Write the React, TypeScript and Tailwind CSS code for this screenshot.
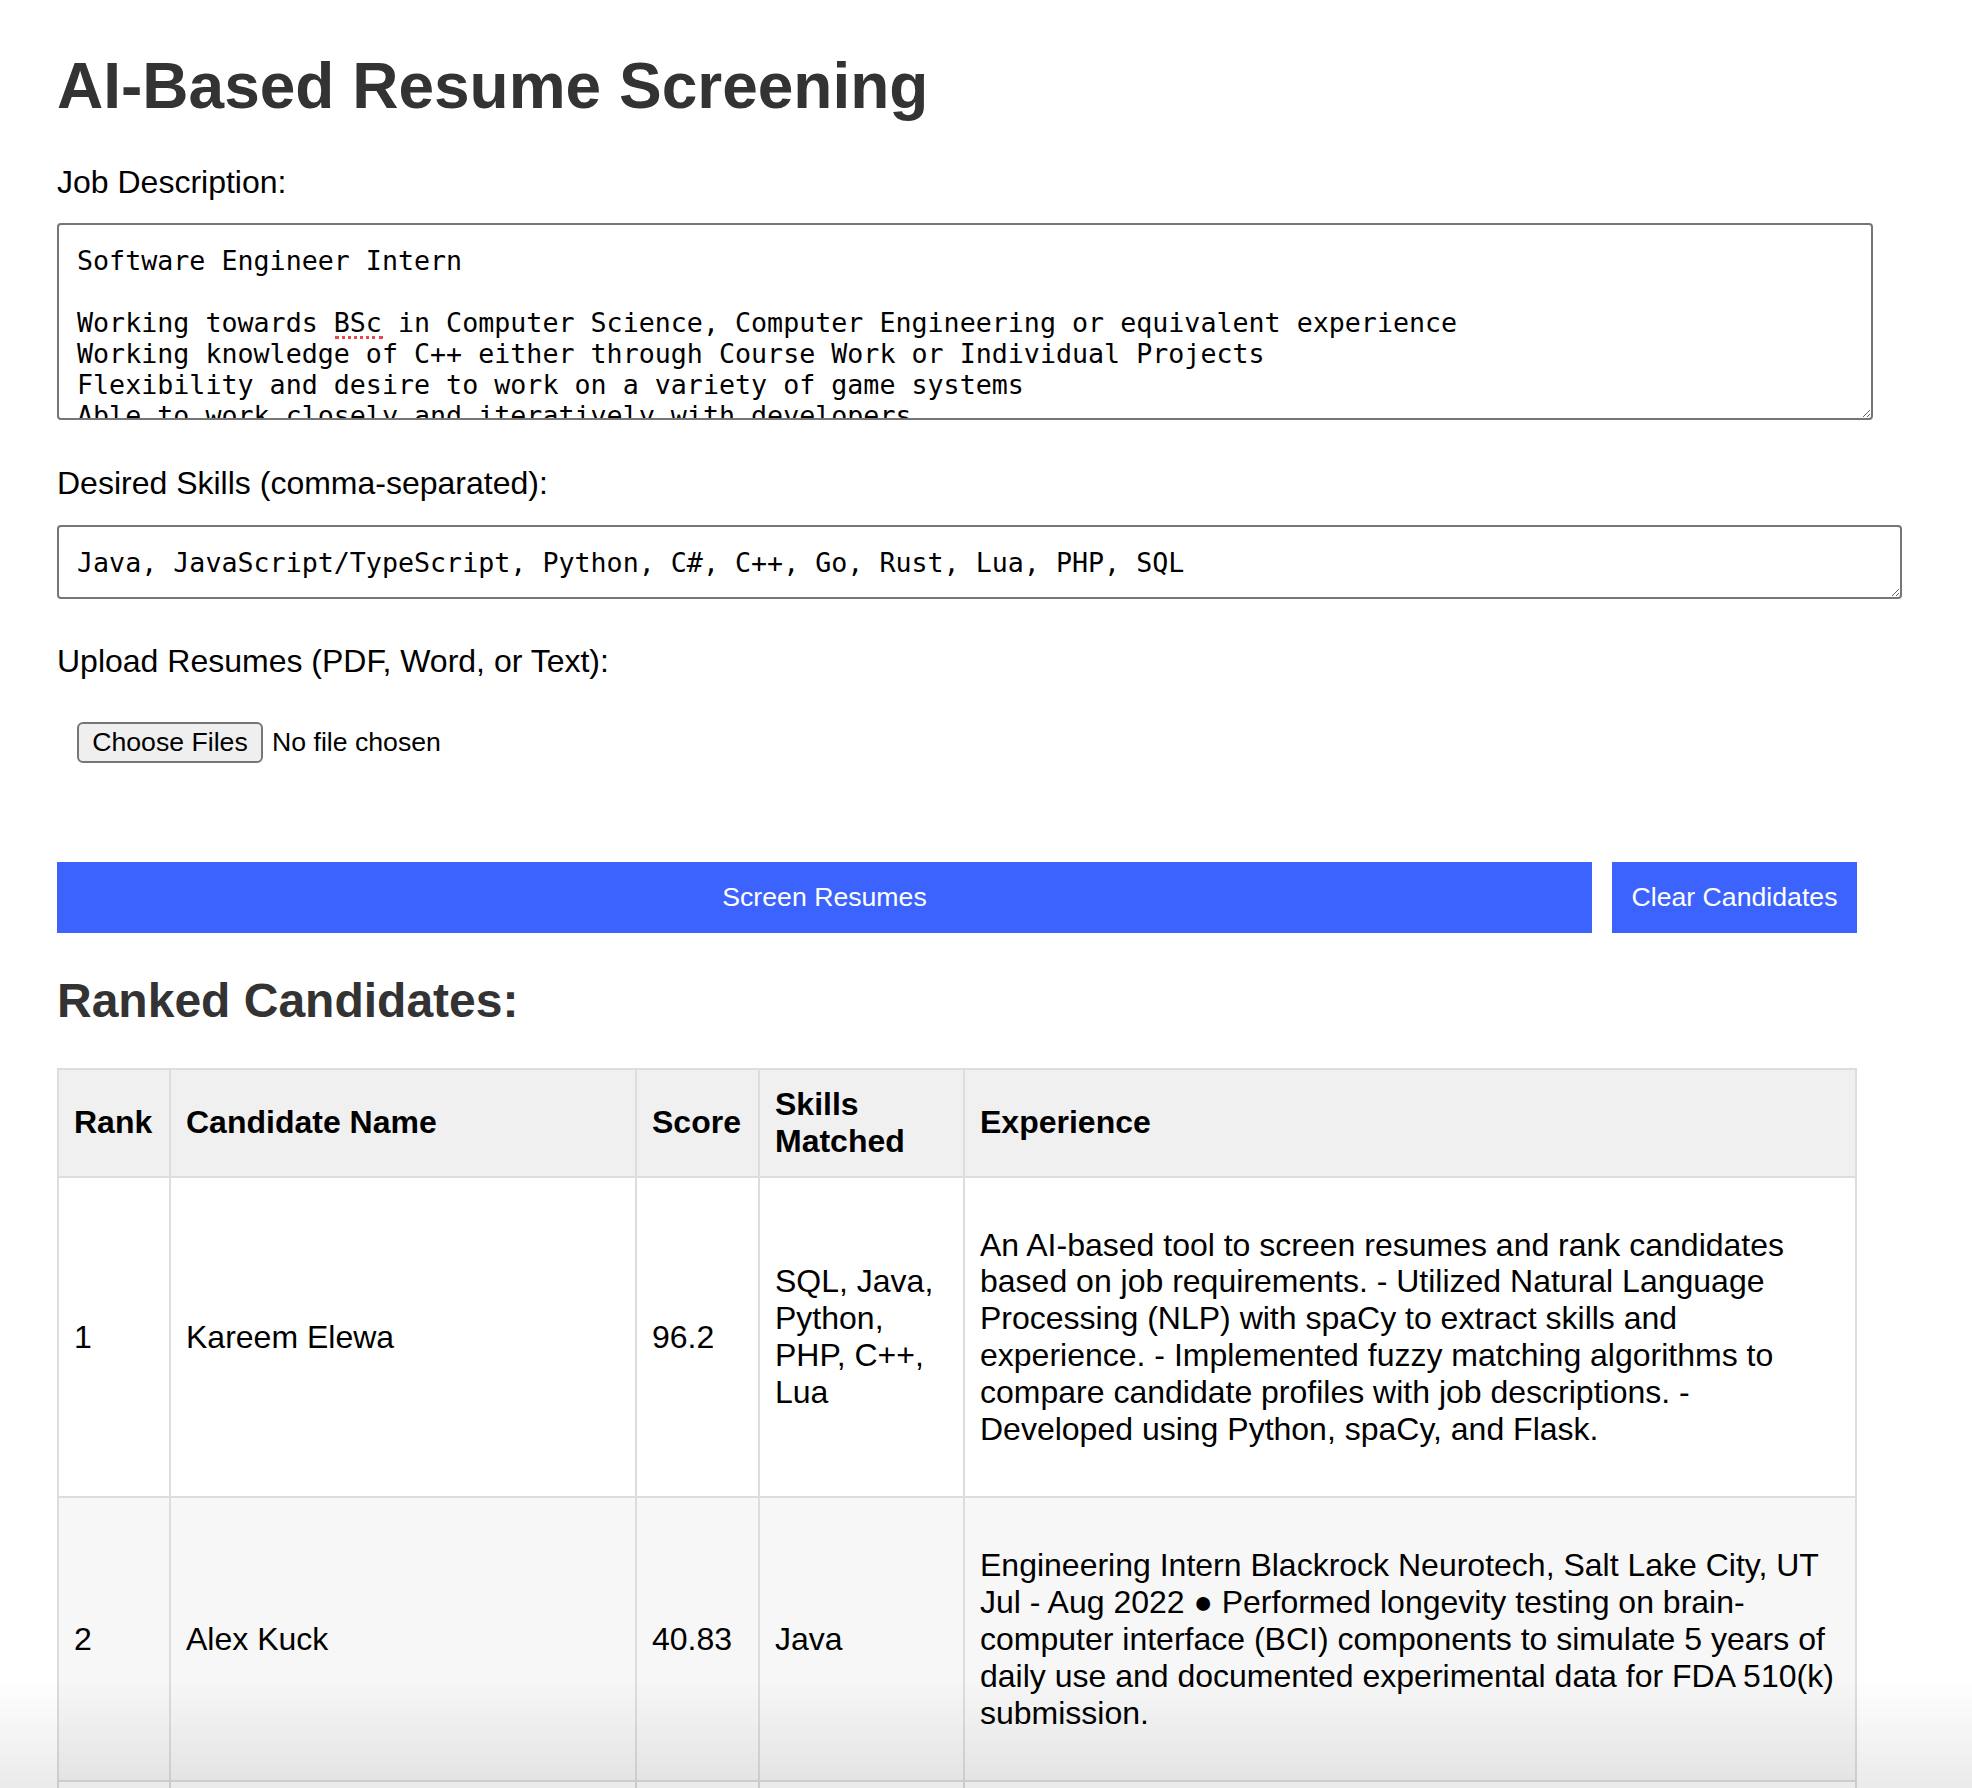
import React from "react";

const jobText = `Software Engineer Intern

Working towards BSc in Computer Science, Computer Engineering or equivalent experience
Working knowledge of C++ either through Course Work or Individual Projects
Flexibility and desire to work on a variety of game systems
Able to work closely and iteratively with developers
Strong communication skills and a passion for games`;

const skillsText = "Java, JavaScript/TypeScript, Python, C#, C++, Go, Rust, Lua, PHP, SQL";

type Row = { rank: number; name: string; score: string; skills: string; exp: string };

const rows: Row[] = [
  {
    rank: 1,
    name: "Kareem Elewa",
    score: "96.2",
    skills: "SQL, Java, Python, PHP, C++, Lua",
    exp: "An AI-based tool to screen resumes and rank candidates based on job requirements. - Utilized Natural Language Processing (NLP) with spaCy to extract skills and experience. - Implemented fuzzy matching algorithms to compare candidate profiles with job descriptions. - Developed using Python, spaCy, and Flask.",
  },
  {
    rank: 2,
    name: "Alex Kuck",
    score: "40.83",
    skills: "Java",
    exp: "Engineering Intern Blackrock Neurotech, Salt Lake City, UT Jul - Aug 2022 \u25CF Performed longevity testing on brain-computer interface (BCI) components to simulate 5 years of daily use and documented experimental data for FDA 510(k) submission.",
  },
  {
    rank: 3,
    name: "Jordan Lee",
    score: "21.5",
    skills: "Python",
    exp: "Research Assistant, University Lab. Built data pipelines and analysis scripts for experimental results.",
  },
];

export default function App() {
  return (
    <div className="relative min-h-[1788px] bg-white font-['Liberation_Sans',Arial,Helvetica,sans-serif] text-black">
      <div className="ml-[57px] flex w-[1800px] flex-col pt-[49px]">
        <h1 className="text-[64px] font-bold leading-[74px] text-[#333333]">AI-Based Resume Screening</h1>

        <label className="mt-[41px] text-[32px] leading-[37px]">Job Description:</label>
        <div className="relative mt-[22px] h-[197px] w-[1816px]">
          <textarea
            spellCheck={false}
            defaultValue={jobText}
            className="box-border block h-[197px] w-[1816px] resize overflow-hidden rounded-[4px] border-2 border-[#767676] bg-white px-[18px] py-[20px] font-['DejaVu_Sans_Mono',Menlo,monospace] text-[26.67px] leading-[31px] text-black outline-none"
          />
          <div className="pointer-events-none absolute left-[278px] top-[113px] h-0 w-[48px] border-t-[3px] border-dotted border-[#e5484d]" />
        </div>

        <label className="mt-[45px] text-[32px] leading-[37px]">Desired Skills (comma-separated):</label>
        <textarea
          spellCheck={false}
          defaultValue={skillsText}
          className="mt-[23px] box-border block h-[74px] w-[1845px] resize overflow-hidden rounded-[4px] border-2 border-[#767676] bg-white px-[18px] py-[20px] font-['DejaVu_Sans_Mono',Menlo,monospace] text-[26.67px] leading-[31px] text-black outline-none"
        />

        <label className="mt-[44px] text-[32px] leading-[37px]">Upload Resumes (PDF, Word, or Text):</label>
        <div className="ml-[20px] mt-[42px] flex items-center gap-[9px]">
          <button className="box-border flex h-[41px] w-[186px] items-center justify-center rounded-[6px] border-2 border-[#767676] bg-[#efefef] text-[26.67px] leading-[31px] text-black">
            Choose Files
          </button>
          <span className="text-[26.67px] leading-[31px]">No file chosen</span>
        </div>

        <div className="mt-[99px] flex gap-[20px]">
          <button className="h-[71px] flex-1 bg-[#3d63fe] text-[26.67px] leading-[31px] text-white">Screen Resumes</button>
          <button className="h-[71px] w-[245px] bg-[#3d63fe] text-[26.67px] leading-[31px] text-white">Clear Candidates</button>
        </div>

        <h2 className="mt-[40px] text-[48px] font-bold leading-[55px] text-[#333333]">Ranked Candidates:</h2>

        <table className="mt-[40px] w-[1800px] table-fixed border-collapse border-2 border-[#dddddd] text-[32px] leading-[36.8px]">
          <colgroup>
            <col className="w-[112px]" />
            <col className="w-[466px]" />
            <col className="w-[123px]" />
            <col className="w-[205px]" />
            <col />
          </colgroup>
          <thead>
            <tr className="bg-[#f0f0f0]">
              <th className="border-2 border-[#dddddd] px-[15px] py-[16px] text-left font-bold">Rank</th>
              <th className="border-2 border-[#dddddd] px-[15px] py-[16px] text-left font-bold">Candidate Name</th>
              <th className="border-2 border-[#dddddd] px-[15px] py-[16px] text-left font-bold">Score</th>
              <th className="border-2 border-[#dddddd] px-[15px] py-[16px] text-left font-bold">Skills Matched</th>
              <th className="border-2 border-[#dddddd] px-[15px] py-[16px] text-left font-bold">Experience</th>
            </tr>
          </thead>
          <tbody>
            {rows.map((r, i) => (
              <tr key={r.rank} className={i % 2 === 1 ? "bg-[#f7f7f7]" : "bg-white"}>
                <td className="border-2 border-[#dddddd] px-[15px] py-[49px] align-middle">{r.rank}</td>
                <td className="border-2 border-[#dddddd] px-[15px] py-[49px] align-middle">{r.name}</td>
                <td className="border-2 border-[#dddddd] px-[15px] py-[49px] align-middle">{r.score}</td>
                <td className="border-2 border-[#dddddd] px-[15px] py-[49px] align-middle">{r.skills}</td>
                <td className="border-2 border-[#dddddd] px-[15px] py-[49px] align-middle">{r.exp}</td>
              </tr>
            ))}
          </tbody>
        </table>
      </div>
      <div className="pointer-events-none fixed bottom-0 left-0 right-0 h-[110px] bg-linear-to-b from-transparent to-black/[0.08]" />
    </div>
  );
}
